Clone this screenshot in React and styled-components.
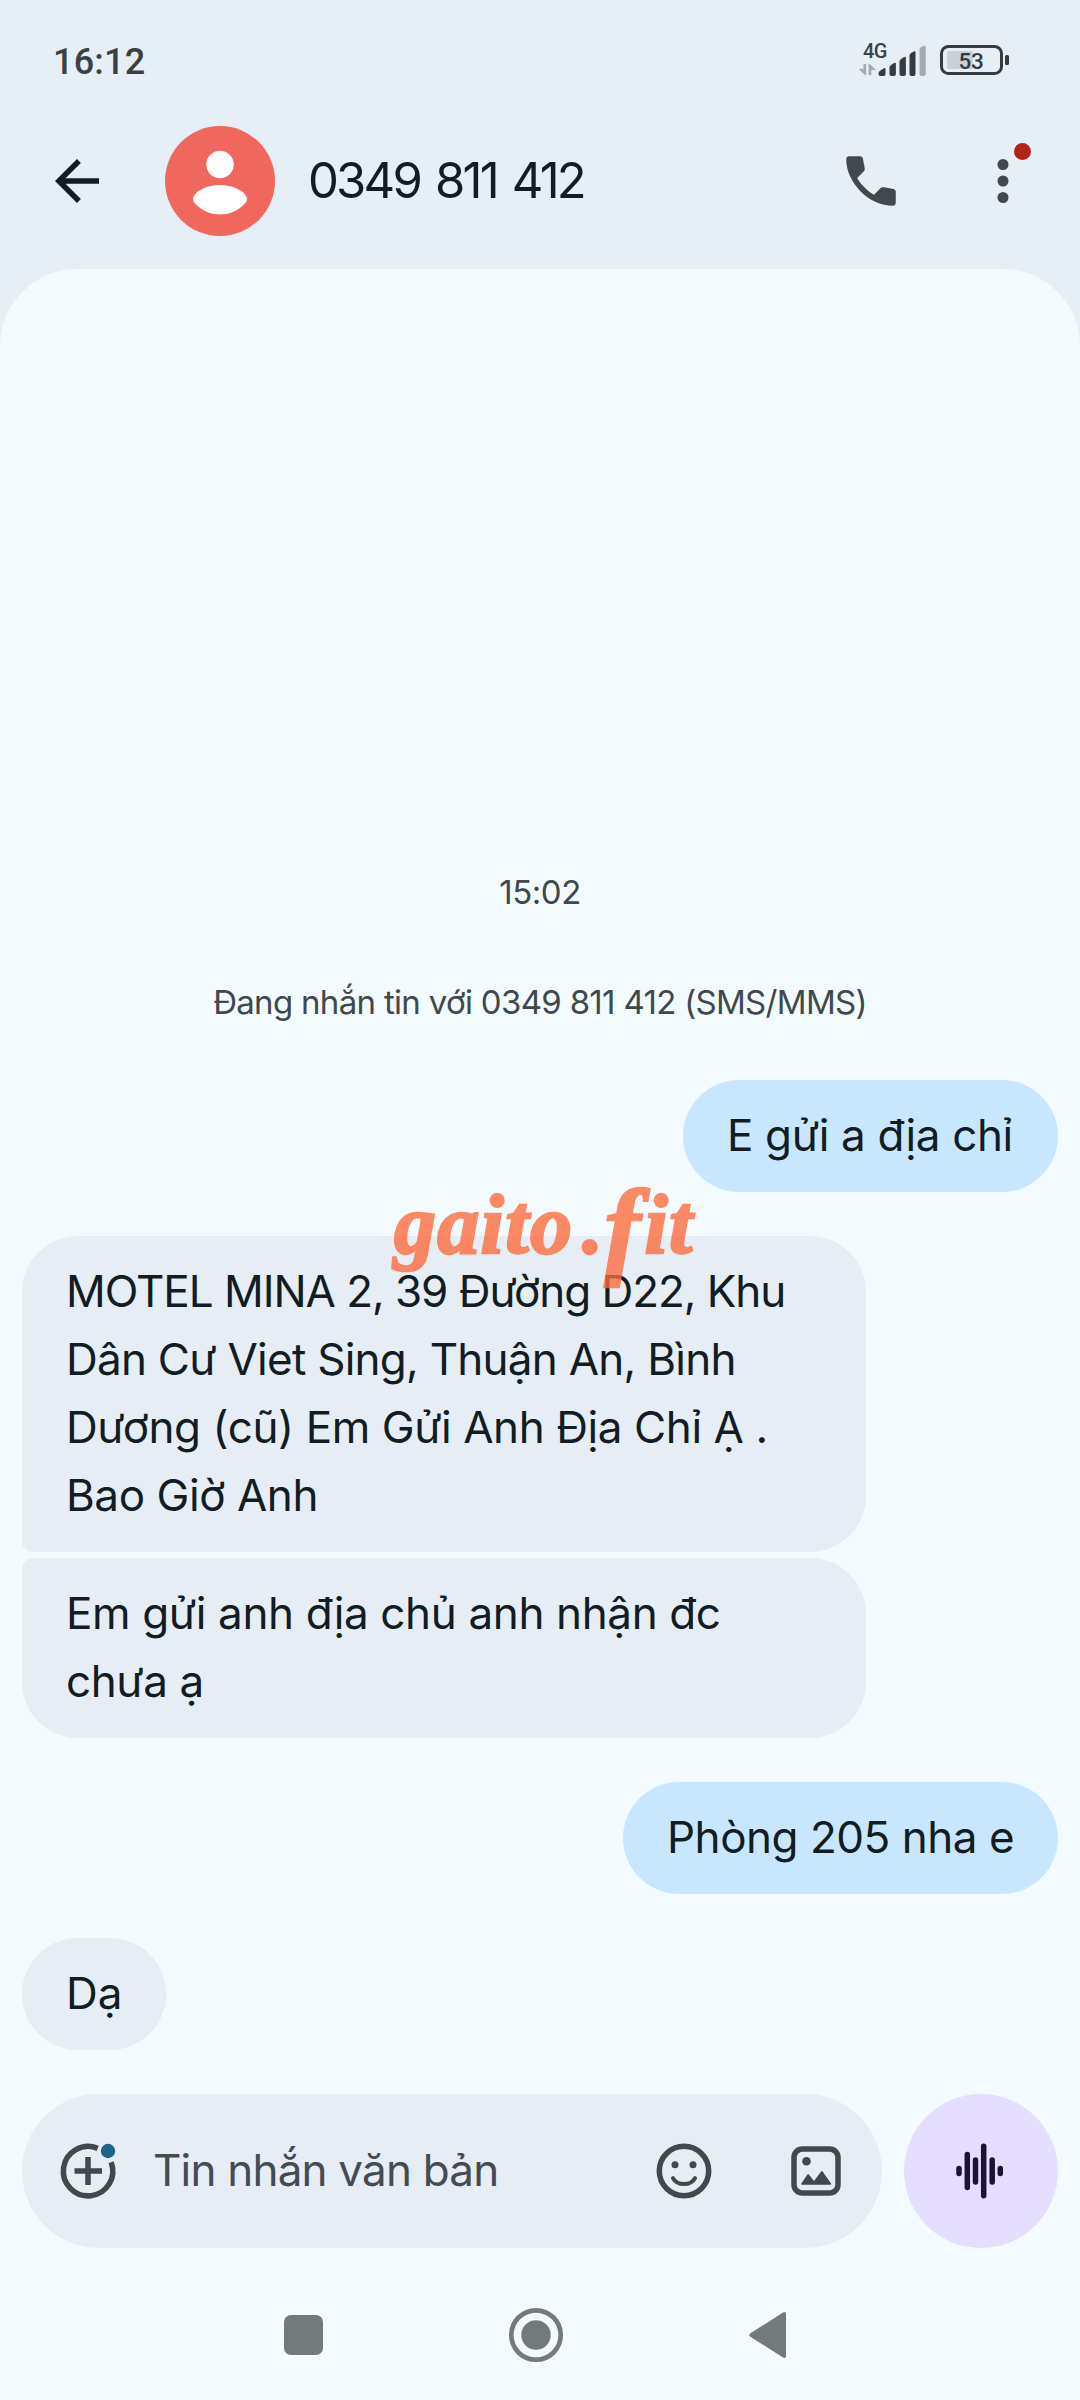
import React from 'react'
import styled, {createGlobalStyle} from 'styled-components'

const GlobalStyle=createGlobalStyle`
*{
  box-sizing:border-box;
}
body{
  margin:0;
  background-color:#f3fbff;
}
`;

const Screen=styled.div`
width:1080px;
height:2400px;
position:relative;
display:flex;
flex-direction:column;
overflow:hidden;
background-color:#e6eef6;
color:#121c23;
font-family:Inter,"Noto Sans",sans-serif;
`;

const StatusBar=styled.div`
height:93px;
padding:28px 71px 0px 53px;
display:flex;
align-items:flex-start;
justify-content:space-between;
font-family:Roboto,sans-serif;
color:#3a4146;
`;

const Clock=styled.div`
padding-top:13px;
font-size:36px;
line-height:42px;
font-weight:500;
letter-spacing:0.2px;
`;

const StatusIcons=styled.div`
display:flex;
`;

const Header=styled.header`
height:176px;
padding:0px 44px;
display:flex;
align-items:center;
`;

const Avatar=styled.div`
width:110px;
height:110px;
margin-left:55px;
border-radius:50%;
background-color:#ef675d;
`;

const Title=styled.h1`
flex:1;
margin:0px 0px 0px 33px;
font-size:49px;
font-weight:400;
line-height:60px;
letter-spacing:-2.8px;
word-spacing:4px;
`;

const IconButton=styled.button`
width:66px;
height:66px;
padding:0px;
border:none;
background-color:transparent;
color:${({$color})=>$color || '#41484e'};
position:relative;
cursor:pointer;
svg{
  display:block;
}
`;

const Actions=styled.div`
display:flex;
gap:66px;
`;

const NoticeDot=styled.span`
position:absolute;
top:-5px;
right:5px;
width:17px;
height:17px;
border-radius:50%;
background-color:#b3231c;
`;

const Conversation=styled.main`
flex:1;
display:flex;
flex-direction:column;
border-radius:77px 77px 0px 0px;
background-color:#f3fbff;
`;

const Messages=styled.div`
flex:1;
display:flex;
flex-direction:column;
justify-content:flex-end;
padding:0px 22px 44px;
`;

const Meta=styled.div`
text-align:center;
font-size:33px;
line-height:44px;
letter-spacing:${({$spacing})=>$spacing}px;
color:#41484c;
margin-bottom:${({$after})=>$after}px;
`;

const Bubble=styled.div`
align-self:${({$sent})=>$sent ? 'flex-end' : 'flex-start'};
width:${({$width})=>$width}px;
padding:21px 0px 23px 44px;
margin-top:${({$joined})=>$joined ? 6 : 44}px;
border-radius:${({$radius})=>$radius || '56px'};
background-color:${({$sent})=>$sent ? '#c8e7ff' : '#e6edf5'};
`;

const Line=styled.div`
font-size:44px;
line-height:68px;
white-space:nowrap;
letter-spacing:${({$spacing})=>$spacing}px;
`;

const Watermark=styled.div`
position:absolute;
left:394px;
top:1175px;
font-family:"Liberation Serif",serif;
font-size:84px;
font-style:italic;
font-weight:700;
line-height:100px;
letter-spacing:1.3px;
white-space:nowrap;
color:#ff6a3a;
-webkit-text-stroke:2.5px #ff6a3a;
opacity:0.78;
`;

const Dot=styled.span`
margin:0px 0px 0px 9px;
`;

const TallF=styled.span`
font-size:108px;
line-height:0;
letter-spacing:4px;
vertical-align:-11px;
`;

const Composer=styled.div`
display:flex;
gap:22px;
padding:0px 22px;
height:154px;
`;

const InputPill=styled.div`
width:860px;
padding:0px 33px;
display:flex;
align-items:center;
border-radius:77px;
background-color:#e6edf5;
`;

const Placeholder=styled.div`
flex:1;
margin-left:32px;
padding-bottom:2px;
font-size:44px;
line-height:60px;
letter-spacing:-0.8px;
color:#444b52;
`;

const VoiceButton=styled.button`
width:154px;
height:154px;
padding:0px;
border:none;
border-radius:50%;
background-color:#e6deff;
color:#1f1235;
display:flex;
align-items:center;
justify-content:center;
`;

const NavBar=styled.nav`
height:152px;
padding:22px 278px 0px 270px;
display:flex;
align-items:center;
justify-content:space-between;
color:#747a7a;
`;

const Signal=()=>(
  <svg width="152" height="60" viewBox="857 28 152 60">
    <text x="863" y="58" fontFamily="Roboto" fontWeight="500" fontSize="20" letterSpacing="-0.6" fill="#3a4146">4G</text>
    <g fill="#a3a9ae">
      <path d="M863.5 64h2.6v11h-1l-6-5.5v-.8h4.4z"/>
      <path d="M868.5 75h2.8v-5h4v-.8l-5.6-5.2h-1.2z"/>
      <path d="M919.5 49.5q0-1.5 1.5-2.3l3-1.5q1.7-.6 1.7 1V74q0 2-2 2h-2.2q-2 0-2-2z"/>
    </g>
    <g fill="#343b41">
      <path d="M878.5 73.5q0-1.8 1.6-2.8l3.4-2.3q2-1 2 .8V74q0 2-2 2h-3q-2 0-2-2z"/>
      <path d="M889.5 67.5q0-1.5 1.5-2.5l3-2q1.9-1 1.9 .8V74q0 2-2 2h-2.4q-2 0-2-2z"/>
      <path d="M899.5 61.5q0-1.5 1.5-2.5l3-1.8q1.9-1 1.9 .8V74q0 2-2 2h-2.4q-2 0-2-2z"/>
      <path d="M909.5 55.5q0-1.5 1.5-2.5l2.8-1.5q1.7-.8 1.7 .8V74q0 2-2 2h-2q-2 0-2-2z"/>
    </g>
    <rect x="941.5" y="46.5" width="60" height="27" rx="7" fill="none" stroke="#343b41" strokeWidth="3"/>
    <path d="M949 51h24v18h-24q-2 0-2-2V53q0-2 2-2z" fill="#c9d0d6"/>
    <rect x="1005" y="55" width="4" height="10" rx="1.5" fill="#343b41"/>
    <text x="958.5" y="69" fontFamily="Roboto" fontWeight="500" fontSize="22.5" letterSpacing="-0.3" fill="#343b41">53</text>
  </svg>
)

const BackIcon=()=>(
  <svg width="66" height="66" viewBox="0 0 24 24" fill="currentColor">
    <path d="M20 11H7.83l5.59-5.59L12 4l-8 8 8 8 1.41-1.41L7.83 13H20v-2z"/>
  </svg>
)

const PersonIcon=()=>(
  <svg width="110" height="110" viewBox="0 0 110 110" fill="#fff">
    <ellipse cx="55" cy="38.5" rx="13.7" ry="13.7"/>
    <path d="M28 73.5C28 66 41 59 55 59S82 66 82 73.5C82 77 71 88.5 55 88.5S28 77 28 73.5z"/>
  </svg>
)

const CallIcon=()=>(
  <svg width="66" height="66" viewBox="0 0 24 24" fill="currentColor">
    <path d="M19.95 21q-3.125 0-6.175-1.362T8.225 15.775 4.362 10.225 3 4.05q0-.45.3-.75T4.05 3H8.1q.35 0 .625.238t.325.562l.65 3.5q.05.4-.025.675T9.4 8.45L6.975 10.9q.5.925 1.187 1.787t1.513 1.663q.775.775 1.625 1.438T13.1 17l2.35-2.35q.225-.225.588-.338t.712-.062l3.45.7q.35.1.575.363T21 15.9v4.05q0 .45-.3.75t-.75.3"/>
  </svg>
)

const MoreIcon=()=>(
  <svg width="66" height="66" viewBox="0 0 24 24" fill="currentColor">
    <circle cx="12" cy="6" r="2"/>
    <circle cx="12" cy="12" r="2"/>
    <circle cx="12" cy="18" r="2"/>
  </svg>
)

const AddIcon=()=>(
  <svg width="66" height="66" viewBox="0 0 66 66" fill="none" stroke="currentColor" strokeWidth="5.5">
    <path d="M42.7 10.4A24.7 24.7 0 1 0 56.1 24.2"/>
    <path d="M33 19v28M19.5 33h27.5"/>
    <circle cx="53" cy="13" r="7.2" fill="#1f6488" stroke="none"/>
  </svg>
)

const SmileIcon=()=>(
  <svg width="66" height="66" viewBox="0 0 66 66" fill="none" stroke="currentColor">
    <circle cx="33" cy="33" r="24.7" strokeWidth="5.5"/>
    <path d="M22 40.2C26.5 48 39.5 48 44 40.2" strokeWidth="4" strokeLinecap="round"/>
    <circle cx="24" cy="26.7" r="3.5" fill="currentColor" stroke="none"/>
    <circle cx="42" cy="26.7" r="3.5" fill="currentColor" stroke="none"/>
  </svg>
)

const GalleryIcon=()=>(
  <svg width="66" height="66" viewBox="0 0 66 66" fill="currentColor">
    <rect x="11" y="11" width="44" height="44" rx="8.3" fill="none" stroke="currentColor" strokeWidth="5.5"/>
    <circle cx="23.5" cy="23.2" r="4.3"/>
    <path d="M18.3 45.5l6.2-9q.7-.8 1.4 0l5.1 6.5 7.1-9.5q.8-.9 1.5 0l8.5 12q.6 1.2-.6 1.2H19q-1.4 0-.7-1.2z"/>
  </svg>
)

const WaveIcon=()=>(
  <svg width="66" height="66" viewBox="0 0 66 66" stroke="currentColor" strokeWidth="5.5" strokeLinecap="round">
    <path d="M11 30.5v5M19.3 16.5v33M27.5 22v22M35.7 8.2v49.5M44.2 22v22M52.3 30.5v5"/>
  </svg>
)

const NavIcon=({children})=>(
  <svg width="66" height="66" viewBox="0 0 66 66" fill="currentColor">{children}</svg>
)

// each line is [text, letter spacing]
const messages=[
  {sent:true,width:375,lines:[['E gửi a địa chỉ',-0.35]]},
  {width:844,radius:'56px 56px 56px 11px',lines:[
    ['MOTEL MINA 2, 39 Đường D22, Khu',-1.04],
    ['Dân Cư Viet Sing, Thuận An, Bình',-0.74],
    ['Dương (cũ) Em Gửi Anh Địa Chỉ Ạ .',-0.42],
    ['Bao Giờ Anh',-0.43],
  ]},
  {width:844,radius:'11px 56px 56px 56px',joined:true,lines:[
    ['Em gửi anh địa chủ anh nhận đc',-0.37],
    ['chưa ạ',-0.4],
  ]},
  {sent:true,width:435,lines:[['Phòng 205 nha e',-0.48]]},
  {width:144,lines:[['Dạ',0]]},
]

const App = () => {
  return (
    <>
      <GlobalStyle/>
      <Screen>
        <StatusBar>
          <Clock>16:12</Clock>
          <StatusIcons>
            <Signal/>
          </StatusIcons>
        </StatusBar>
        <Header>
          <IconButton $color='#121c23'><BackIcon/></IconButton>
          <Avatar><PersonIcon/></Avatar>
          <Title>0349 811 412</Title>
          <Actions>
            <IconButton><CallIcon/></IconButton>
            <IconButton><MoreIcon/><NoticeDot/></IconButton>
          </Actions>
        </Header>
        <Conversation>
          <Messages>
            <Meta $spacing={-0.45} $after={66}>15:02</Meta>
            <Meta $spacing={-0.69} $after={12}>Đang nhắn tin với 0349 811 412 (SMS/MMS)</Meta>
            {messages.map(({sent,width,radius,joined,lines})=>(
              <Bubble key={lines[0][0]} $sent={sent} $width={width} $radius={radius} $joined={joined}>
                {lines.map(([text,spacing])=><Line key={text} $spacing={spacing}>{text}</Line>)}
              </Bubble>
            ))}
          </Messages>
          <Composer>
            <InputPill>
              <IconButton><AddIcon/></IconButton>
              <Placeholder>Tin nhắn văn bản</Placeholder>
              <Actions>
                <IconButton><SmileIcon/></IconButton>
                <IconButton><GalleryIcon/></IconButton>
              </Actions>
            </InputPill>
            <VoiceButton><WaveIcon/></VoiceButton>
          </Composer>
          <NavBar>
            <NavIcon><rect x="14" y="13" width="39" height="40" rx="7"/></NavIcon>
            <NavIcon>
              <circle cx="33" cy="33" r="24.7" fill="none" stroke="currentColor" strokeWidth="4.7"/>
              <circle cx="33" cy="33" r="14.7"/>
            </NavIcon>
            <NavIcon><path d="M14.5 31.2L47 10.5q3-1.4 3 1.5v42q0 2.8-3 1.5L14.5 34.8q-2.4-1.8 0-3.6z"/></NavIcon>
          </NavBar>
        </Conversation>
        <Watermark>gaito<Dot>.</Dot><TallF>f</TallF>it</Watermark>
      </Screen>
    </>
  )
}

export default App
